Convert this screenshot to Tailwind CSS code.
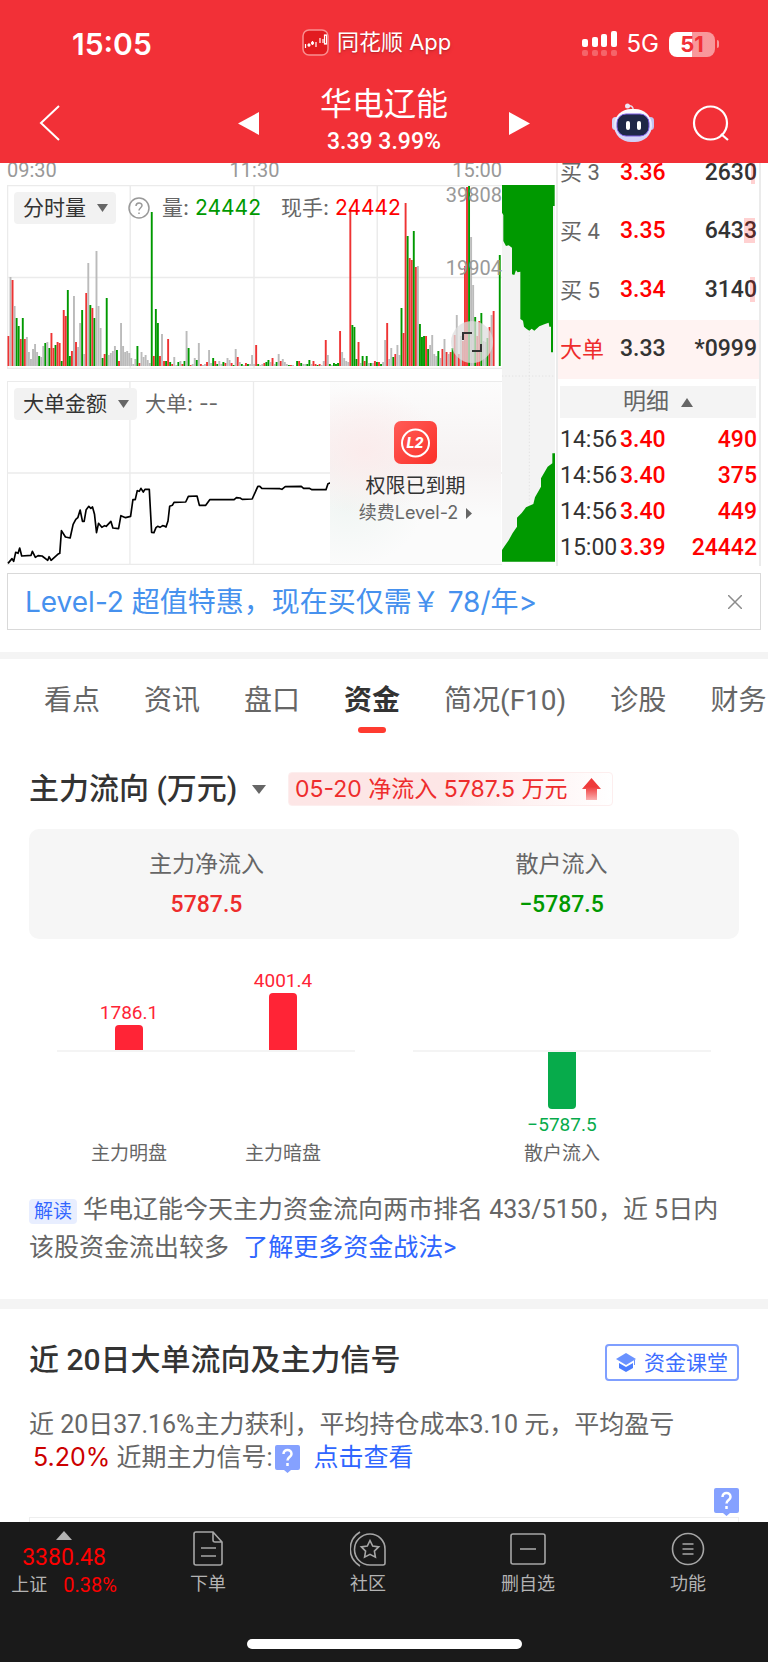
<!DOCTYPE html>
<html lang="zh-CN">
<head>
    <meta charset="UTF-8">
    <meta name="viewport" content="width=device-width, initial-scale=1.0">
    <title>华电辽能</title>
    <script src="https://cdn.jsdelivr.net/npm/@tailwindcss/browser@4"></script>
</head>
<body class="bg-white text-[#666] font-[Roboto,'Noto_Sans_CJK_SC',sans-serif] overflow-x-hidden">

    <!-- header -->
    <header class="bg-[#f23037] text-white h-[163px] pt-6">
        <div class="flex items-center h-10 pl-[72px] pr-[49px]">
            <span class="w-[230px] font-[Inter] font-semibold text-[30px] leading-10">15:05</span>
            <div class="flex items-center gap-2 pb-1">
                <svg class="w-[27px] h-[27px] shrink-0" viewBox="0 0 27 27">
                    <rect x="1" y="1" width="25" height="25" rx="6" fill="#e21c20" stroke="#f98f90" stroke-width="1.5"/>
                    <g fill="none" stroke="#fff" stroke-width="1.2">
                        <path d="M3.5 15v4M7 14.5v3M10.5 12v4M14 13v5M18 9v5M21 10v4"/>
                        <rect x="22.5" y="6" width="2" height="9"/>
                        <circle cx="7" cy="16" r="1"/>
                        <circle cx="10.500" cy="14" r="1"/>
                    </g>
                </svg>
                <span class="font-[Inter,'Noto_Sans_CJK_SC'] text-[22px] leading-8 whitespace-nowrap text-shadow-md">同花顺 App</span>
            </div>
            <div class="flex items-center ml-auto gap-[10px]">
                <svg class="w-[35px] h-[26px]" viewBox="0 0 35 26" fill="#fff">
                    <rect x="0" y="8" width="6" height="8" rx="2"/>
                    <rect x="10" y="6" width="6" height="10" rx="2"/>
                    <rect x="19" y="3" width="6" height="13" rx="2"/>
                    <rect x="29" y="0" width="6" height="16" rx="2"/>
                    <g opacity=".25">
                        <rect x="0" y="19" width="6" height="6" rx="2"/>
                        <rect x="10" y="19" width="6" height="6" rx="2"/>
                        <rect x="19" y="19" width="6" height="6" rx="2"/>
                        <rect x="29" y="19" width="6" height="6" rx="2"/>
                    </g>
                </svg>
                <span class="font-[Inter] text-[24px] leading-8">5G</span>
                <div class="flex items-center gap-[2px]">
                    <span class="w-[46px] h-[25px] rounded-lg bg-linear-to-r from-white from-50% to-white/50 to-50% text-[#f23037] font-[Inter] font-bold text-[22px] leading-[25px] text-center">51</span>
                    <span class="w-[2px] h-2 rounded-r bg-white/50"></span>
                </div>
            </div>
        </div>
        <div class="grid grid-cols-3 items-center h-[76px] mt-[21px] px-[38px]">
            <button class="w-6 h-10" aria-label="返回">
                <svg class="w-6 h-10" viewBox="0 0 24 40" fill="none" stroke="#fff" stroke-width="2"><path d="M21 3 3 20l18 17"/></svg>
            </button>
            <div class="flex items-center justify-between w-[292px] justify-self-center">
                <button aria-label="上一只"><svg class="w-[21px] h-[23px]" viewBox="0 0 21 23" fill="#fff"><path d="M0 11.500 21 0v23z"/></svg></button>
                <div class="text-center">
                    <h1 class="text-[32px] leading-[38px]">华电辽能</h1>
                    <p class="text-[23px] leading-[38px] font-medium">3.39 3.99%</p>
                </div>
                <button aria-label="下一只"><svg class="w-[21px] h-[23px]" viewBox="0 0 21 23" fill="#fff"><path d="M21 11.500 0 0v23z"/></svg></button>
            </div>
            <div class="flex items-center justify-end gap-[37px]">
                <button aria-label="智能助手">
                    <svg class="w-11 h-10" viewBox="0 0 44 40">
                        <defs>
                            <linearGradient id="rb" x1="0" y1="0" x2="0" y2="1"><stop offset="0" stop-color="#fff"/><stop offset="1" stop-color="#cfcdf6"/></linearGradient>
                        </defs>
                        <path d="M22 8c1-4-2-6-5-5" fill="none" stroke="#e6d9e8" stroke-width="1.500"/>
                        <circle cx="16.500" cy="3" r="2.500" fill="#eee6f6"/>
                        <rect x="1" y="14" width="7" height="13" rx="3.500" fill="#d4d5f5"/>
                        <rect x="36" y="14" width="7" height="13" rx="3.500" fill="#c1c3ef"/>
                        <rect x="3" y="6" width="38" height="33" rx="17" fill="url(#rb)"/>
                        <rect x="6" y="11" width="32" height="22" rx="9" fill="#1f2747" stroke="#7a5be0"/>
                        <rect x="15" y="18" width="4" height="9" rx="2" fill="#fff"/>
                        <rect x="26" y="18" width="4" height="9" rx="2" fill="#fff"/>
                    </svg>
                </button>
                <button aria-label="搜索">
                    <svg class="w-[38px] h-[38px]" viewBox="0 0 38 38" fill="none" stroke="#fff" stroke-width="2.200"><circle cx="18.500" cy="19" r="16.500"/><path d="m29 30 7 6"/></svg>
                </button>
            </div>
        </div>
    </header>

    <main>
        <!-- charts and order book -->
        <section class="flex px-[7px]">
            <div class="flex-1 min-w-0">
                <div class="flex justify-between h-[22px] text-[20px] leading-[14px] text-[#999] overflow-hidden">
                    <span>09:30</span><span>11:30</span><span>15:00</span>
                </div>
                <div class="relative h-[184px]">
                    <svg id="volume" class="block w-full h-full" viewBox="0 0 494 184" preserveAspectRatio="none">
                        <path d="M0 .5h494M0 92.500h494M0 183.500h494M.5 0v184M123 0v184M246.500 0v184M369.500 0v184" fill="none" stroke="#ebebeb" stroke-width="1.500"/>
                    </svg>
                    <div class="absolute top-[7px] left-[7px] flex items-center h-8 text-[21px] font-[Inter,'Noto_Sans_CJK_SC'] whitespace-nowrap">
                        <div class="relative bg-[#f2f2f2] rounded">
                            <select class="appearance-none block h-8 pl-[9px] pr-[30px] text-[#333]" aria-label="副图指标"><option>分时量</option></select>
                            <svg class="absolute right-2 top-3 w-[11px] h-2 pointer-events-none" viewBox="0 0 11 8"><path d="M0 0h11L5.500 8z" fill="#666"/></svg>
                        </div>
                        <svg class="w-[22px] h-[22px] mx-3" viewBox="0 0 22 22" fill="none" stroke="#999" stroke-width="1.500">
                            <circle cx="11" cy="11" r="10"/>
                            <path d="M8 9c0-4 6-4 6-.5 0 2-3 2.500-3 5M11 15.500v1.500"/>
                        </svg>
                        <span>量:&nbsp;</span><span class="text-[#009900]">24442</span>
                        <span class="ml-5">现手:&nbsp;</span><span class="text-[#ff0000]">24442</span>
                    </div>
                    <span class="absolute right-0 top-0 text-[20px] leading-5 text-[#999]">39808</span>
                    <span class="absolute right-0 top-[73px] text-[20px] leading-5 text-[#999]">19904</span>
                    <button class="absolute right-[9px] bottom-[6px] size-[42px] rounded-full bg-[#dedede]/75 flex items-center justify-center" aria-label="全屏">
                        <svg class="w-5 h-[22px]" viewBox="0 0 20 22" fill="none" stroke="#333" stroke-width="2"><path d="M1 9V2h9M19 13v7h-9"/></svg>
                    </button>
                </div>
                <div class="relative h-[184px] mt-3">
                    <svg class="block w-full h-full" viewBox="21 33 1482 552" preserveAspectRatio="none" fill="none">
                        <path d="M21 34h1482M21 309h1482M21 583h1482M22 33v552M389 33v552M759 33v552" stroke="#ebebeb" stroke-width="4"/>
                        <path d="M24 580 36 566l5 8 6-27 7 3 5-16 6 24 28-2 4-12 9 18 8-5 12 1 17 13 4-11 6 11 20-18 6-3 5-68 12 19 14 3 9-41 8-15 6-5 7-23 7 34h5l6-35 8-10 6 6 5-4 6 22 6 55 6-28 10 12 8-5 5 2 14-15 6 20 17 2 7-39 14 6 15-4 7-50h7l6-27 6 2 5-9 7 11 5-8h13l7 129 7 1 6-15 5-4 7 3 8-5 5 1 5 3 6-18 5-44 8-3 5-9 35-1 8-17 26-1 7 28h19l12-17h73l7-6 11 1 6 4 30-1 17-38h6l6 6 54 1 6 2 10-8 48-1 7 6h17l8 4h42l6-18 8-3h7" stroke="#000" stroke-width="5" stroke-linejoin="round"/>
                    </svg>
                    <div class="absolute top-[7px] left-[7px] flex items-center h-8 gap-2 text-[21px] font-[Inter,'Noto_Sans_CJK_SC'] whitespace-nowrap">
                        <div class="relative bg-[#f2f2f2] rounded">
                            <select class="appearance-none block h-8 pl-[9px] pr-[30px] text-[#333]" aria-label="第二副图指标"><option>大单金额</option></select>
                            <svg class="absolute right-2 top-3 w-[11px] h-2 pointer-events-none" viewBox="0 0 11 8"><path d="M0 0h11L5.500 8z" fill="#666"/></svg>
                        </div>
                        <span>大单: --</span>
                    </div>
                    <a href="#" class="absolute right-px top-px bottom-px w-[171px] flex flex-col items-center pt-[39px] bg-[#fafafa] bg-[radial-gradient(ellipse_at_20%_38%,#fbecec_0%,transparent_40%),radial-gradient(ellipse_at_10%_68%,#f1f6f4_0%,transparent_35%),linear-gradient(#fcfcfc,#f6f2f2_45%,#fbfbfb_75%)]">
                        <svg class="size-[43px]" viewBox="0 0 43 43">
                            <defs><linearGradient id="l2" x1="0" y1="0" x2="1" y2="1"><stop offset="0" stop-color="#ff5b56"/><stop offset="1" stop-color="#fb3029"/></linearGradient></defs>
                            <rect width="43" height="43" rx="7" fill="url(#l2)"/>
                            <circle cx="21.500" cy="22" r="13.500" fill="none" stroke="#fff" stroke-width="2"/>
                            <text x="21" y="27" text-anchor="middle" fill="#fff" font-family="Inter" font-size="14" font-style="italic" font-weight="800">L2</text>
                        </svg>
                        <span class="mt-2 text-[20px] leading-7 text-[#333]">权限已到期</span>
                        <span class="flex items-center gap-2 text-[18px] leading-[26px] font-[Inter,'Noto_Sans_CJK_SC']">续费Level-2
                            <svg class="w-[6px] h-[11px]" viewBox="0 0 6 11"><path d="M0 0l6 5.500L0 11z" fill="#666"/></svg>
                        </span>
                    </a>
                </div>
            </div>

            <!-- price depth -->
            <div class="w-[53px] mt-[22px] h-[377px] bg-[#f3f3f3]">
                <svg class="block w-full h-full" viewBox="0 0 159 1131" preserveAspectRatio="none">
                    <path d="M0 573h159M82 430v560" stroke="#e2e2e2" stroke-width="3" stroke-dasharray="4 6"/>
                    <path transform="translate(-753 -90)" fill="#009900" d="M753 90h158v63h-5v439h-6v-77h-5l-2-12-13 5-15 6-15 13-8-6-7 6-8-5-8-7-3-18-8-5V350l-8 2-5-6-5 14-7-2v-80l-10-7-8 2-8-15v-78l-6-10-2 30h-5z"/>
                    <path transform="translate(-543 555)" fill="#009900" d="M543 575v-35l8-12 12-17 12-22 13-19v-27l14-14 13-17 22-10 5-20 18-32v-25l20-35 14-10v-30h8v325z"/>
                </svg>
            </div>

            <!-- order book -->
            <div class="w-[205px] ml-px border-x-2 border-[#ebebeb] overflow-hidden">
                <table class="w-full table-fixed text-[23px] font-medium">
                    <tbody>
                        <tr class="h-[39px] align-top leading-5">
                            <td class="pl-[2px] w-[62px] font-normal text-[22px]">买 3</td>
                            <td class="w-[56px] text-[#ff0000]">3.36</td>
                            <td class="relative pr-[2px] text-right text-[#333]"><i class="absolute top-0 right-1 w-1 h-[21px] bg-[#ff0000]/18"></i>2630</td>
                        </tr>
                        <tr class="h-[59px]">
                            <td class="pl-[2px] font-normal text-[22px]">买 4</td>
                            <td class="text-[#ff0000]">3.35</td>
                            <td class="relative pr-[2px] text-right text-[#333]"><i class="absolute top-4 right-1 w-[11px] h-[25px] bg-[#ff0000]/18"></i>6433</td>
                        </tr>
                        <tr class="h-[59px]">
                            <td class="pl-[2px] font-normal text-[22px]">买 5</td>
                            <td class="text-[#ff0000]">3.34</td>
                            <td class="relative pr-[2px] text-right text-[#333]"><i class="absolute top-4 right-1 w-[5px] h-[25px] bg-[#ff0000]/18"></i>3140</td>
                        </tr>
                        <tr class="h-[59px] bg-[#fff3f2] text-[#333]">
                            <td class="pl-[2px] font-normal text-[22px] text-[#ee2c2c]">大单</td>
                            <td>3.33</td>
                            <td class="pr-[2px] text-right">*0999</td>
                        </tr>
                    </tbody>
                </table>
                <button class="flex items-center justify-center gap-3 w-[196px] h-8 mt-[7px] ml-[2px] mb-1 bg-[#f4f4f4] text-[23px] leading-8">明细
                    <svg class="w-3 h-[9px]" viewBox="0 0 12 9"><path d="M0 9h12L6 0z" fill="#666"/></svg>
                </button>
                <table class="w-full table-fixed text-[23px] leading-9 font-medium text-[#ff0000]">
                    <tbody>
                        <tr><td class="pl-[2px] w-[62px] font-normal text-[#333]">14:56</td><td class="w-[56px]">3.40</td><td class="pr-[2px] text-right">490</td></tr>
                        <tr><td class="pl-[2px] font-normal text-[#333]">14:56</td><td>3.40</td><td class="pr-[2px] text-right">375</td></tr>
                        <tr><td class="pl-[2px] font-normal text-[#333]">14:56</td><td>3.40</td><td class="pr-[2px] text-right">449</td></tr>
                        <tr><td class="pl-[2px] font-normal text-[#333]">15:00</td><td>3.39</td><td class="pr-[2px] text-right">24442</td></tr>
                    </tbody>
                </table>
            </div>
        </section>

        <!-- promo -->
        <div class="flex items-center justify-between mx-[7px] mt-[7px] h-[57px] pl-[17px] pr-[18px] border border-[#d9d9d9]">
            <a href="#" class="font-[Inter,'Noto_Sans_CJK_SC'] text-[28px] leading-10 text-[#4691ee]">Level-2 超值特惠，现在买仅需￥ 78/年&gt;</a>
            <button aria-label="关闭"><svg class="size-[14px]" viewBox="0 0 14 14" stroke="#8c8c8c" stroke-width="1.500"><path d="m0 0 14 14M14 0 0 14"/></svg></button>
        </div>

        <nav class="mt-[22px] border-t-7 border-[#f4f4f4] flex gap-11 pl-11 pt-[22px] h-[100px] text-[28px] leading-10 whitespace-nowrap overflow-hidden">
            <a href="#">看点</a>
            <a href="#">资讯</a>
            <a href="#">盘口</a>
            <a href="#" class="flex flex-col items-center gap-[6px] font-bold text-[#333]">资金<i class="w-7 h-[6px] rounded-sm bg-[#ff3b30]"></i></a>
            <a href="#">简况(F10)</a>
            <a href="#">诊股</a>
            <a href="#">财务</a>
        </nav>

        <!-- main fund flow -->
        <section class="px-[29px]">
            <div class="flex items-center gap-[22px] h-[34px] mt-5">
                <div class="relative">
                    <select class="appearance-none block h-10 pr-7 text-[30px] leading-10 font-medium text-[#333]" aria-label="资金流向单位"><option>主力流向 (万元)</option></select>
                    <svg class="absolute right-0 top-4 w-[14px] h-[9px] pointer-events-none" viewBox="0 0 14 9"><path d="M0 0h14L7 9z" fill="#666"/></svg>
                </div>
                <div class="flex items-center gap-[14px] h-[34px] pl-[6px] pr-[11px] rounded border border-[#fdeeee] bg-linear-to-r from-[#fde6e6] from-50% to-white font-[Inter,'Noto_Sans_CJK_SC'] text-[23px] leading-8 text-[#ee2c2c] whitespace-nowrap">05-20 净流入 5787.5 万元
                    <svg class="w-[19px] h-[22px]" viewBox="0 0 19 22">
                        <defs><linearGradient id="up" x1="0" y1="0" x2="0" y2="1"><stop offset=".4" stop-color="#ee3a3a"/><stop offset="1" stop-color="#fbb0b0"/></linearGradient></defs>
                        <path d="M9.500 0 19 11h-4v11H4V11H0z" fill="url(#up)"/>
                    </svg>
                </div>
            </div>

            <dl class="grid grid-cols-2 mt-[23px] h-[110px] pt-4 rounded-[10px] bg-[#f6f6f6] text-center">
                <div>
                    <dt class="text-[23px] leading-10">主力净流入</dt>
                    <dd class="text-[23px] leading-10 font-medium text-[#ee2c2c]">5787.5</dd>
                </div>
                <div>
                    <dt class="text-[23px] leading-10">散户流入</dt>
                    <dd class="text-[23px] leading-10 font-medium text-[#009900]">−5787.5</dd>
                </div>
            </dl>

            <div class="flex justify-between px-7 mt-[29px] text-[19px] leading-6 text-center">
                <div class="w-[298px]">
                    <div class="flex items-end justify-between h-[84px] px-8 border-b-2 border-[#f4f4f4] text-[#ff2436]">
                        <div class="w-20 flex flex-col items-center"><span>1786.1</span><i class="w-7 h-[25px] rounded-t bg-[#ff2436]"></i></div>
                        <div class="w-20 flex flex-col items-center"><span>4001.4</span><i class="w-7 h-[57px] rounded-t bg-[#ff2436]"></i></div>
                    </div>
                    <div class="flex justify-between px-8 mt-[90px]">
                        <span class="w-20">主力明盘</span>
                        <span class="w-20">主力暗盘</span>
                    </div>
                </div>
                <div class="w-[298px]">
                    <div class="h-[84px] border-b-2 border-[#f4f4f4]"></div>
                    <div class="flex flex-col items-center h-[90px] text-[#07ab4b]"><i class="w-7 h-[57px] mb-1 rounded-b bg-[#07ab4b]"></i><span>−5787.5</span></div>
                    <span>散户流入</span>
                </div>
            </div>

            <p class="mt-[25px] text-[25px] leading-[38px]">
                <span class="inline-block align-middle px-[5px] mr-[6px] rounded bg-[#e8eeff] text-[19px] leading-[25px] text-[#3366ff]">解读</span>华电辽能今天主力资金流向两市排名 433/5150，近 5日内<br>该股资金流出较多 <a href="#" class="ml-2 text-[#2f66ff] whitespace-nowrap">了解更多资金战法&gt;</a>
            </p>
        </section>

        <!-- 20 day signals -->
        <section class="mt-8 border-t-10 border-[#f4f4f4] px-[29px]">
            <div class="flex items-start justify-between mt-[35px]">
                <h2 class="text-[30px] leading-8 font-medium text-[#333]">近 20日大单流向及主力信号</h2>
                <button class="flex items-center gap-2 h-[37px] px-[9px] rounded border-2 border-[#7f9fff] text-[21px] leading-8 text-[#3d6dff]">
                    <svg class="w-5 h-[19px]" viewBox="0 0 20 19" fill="#6a92ff"><path d="M10 0 20 6 10 12 0 6z"/><path d="M3 10v5l7 4 7-4v-5l-7 4z" fill="#4b7dff"/><path d="M18.500 7v5" stroke="#6a92ff"/></svg>资金课堂
                </button>
            </div>
            <p class="mt-[27px] text-[25px] leading-[33px]">近 20日37.16%主力获利，平均持仓成本3.10 元，平均盈亏<br>
                <span class="ml-1 font-[Inter] text-[#cc0000]">5.20%</span> 近期主力信号:<svg class="inline-block align-middle w-[25px] h-[28px] ml-[2px] mr-[14px]" viewBox="0 0 25 28"><path d="M2 0h21q2 0 2 2v21q0 2-2 2h-7l-3.500 3L9 25H2q-2 0-2-2V2q0-2 2-2z" fill="#85a1ff"/><path d="M8.500 9c0-5.500 8-5.500 8 0 0 3-4 3-4 6.500M12.500 18v3" fill="none" stroke="#fff" stroke-width="2.500"/></svg><a href="#" class="text-[#2f66ff]">点击查看</a>
            </p>
            <div class="flex justify-end mt-[14px]">
                <svg class="w-[25px] h-[28px]" viewBox="0 0 25 28"><path d="M2 0h21q2 0 2 2v21q0 2-2 2h-7l-3.500 3L9 25H2q-2 0-2-2V2q0-2 2-2z" fill="#85a1ff"/><path d="M8.500 9c0-5.500 8-5.500 8 0 0 3-4 3-4 6.500M12.500 18v3" fill="none" stroke="#fff" stroke-width="2.500"/></svg>
            </div>
            <div class="h-[5px] mt-px border border-b-0 border-[#eee]"></div>
        </section>
    </main>

    <!-- bottom bar -->
    <footer class="bg-[#1a1a1a] h-[141px] text-[#b3b3b3]">
        <div class="grid grid-cols-[128px_1fr_1fr_1fr_1fr] h-[117px] text-[18px] leading-[26px] text-center">
            <a href="#" class="flex flex-col items-center pt-[9px]">
                <svg class="w-4 h-[9px]" viewBox="0 0 16 9"><path d="M0 9h16L8 0z" fill="#b3b3b3"/></svg>
                <span class="mt-1 text-[23px] leading-7 text-[#ff0000]">3380.48</span>
                <span class="flex gap-4"><span>上证</span><span class="text-[20px] text-[#ff0000]">0.38%</span></span>
            </a>
            <a href="#" class="flex flex-col items-center gap-1 pt-[9px]">
                <svg class="size-9" viewBox="0 0 36 36" fill="none" stroke="#a6a6a6" stroke-width="1.600"><path d="M4 3q0-2 2-2h17l9 10v21q0 2-2 2H6q-2 0-2-2zM23 1v8q0 2 2 2h7M11 17h15M11 25h15"/></svg>
                下单
            </a>
            <a href="#" class="flex flex-col items-center gap-1 pt-[9px]">
                <svg class="size-9" viewBox="0 0 36 36" fill="none" stroke="#a6a6a6" stroke-width="1.600"><path d="M20 3a15 15 0 1 0 0 31h13q2 0 2-2V18A15 15 0 0 0 20 3zM10 1C-3 9-3 27 10 35"/><path d="m20 9.500 2.700 5.500 6 .9-4.300 4.200 1 6-5.400-2.800-5.400 2.800 1-6-4.300-4.200 6-.9z"/></svg>
                社区
            </a>
            <a href="#" class="flex flex-col items-center gap-1 pt-[9px]">
                <svg class="size-9" viewBox="0 0 36 36" fill="none" stroke="#a6a6a6" stroke-width="1.600"><rect x="1" y="3" width="34" height="30" rx="2"/><path d="M10 18h16"/></svg>
                删自选
            </a>
            <a href="#" class="flex flex-col items-center gap-1 pt-[9px]">
                <svg class="size-9" viewBox="0 0 36 36" fill="none" stroke="#a6a6a6" stroke-width="1.600"><circle cx="18" cy="18" r="15.500"/><path d="M12.500 13h11M12.500 18h11M12.500 23h11"/></svg>
                功能
            </a>
        </div>
        <div class="w-[275px] h-[10px] mx-auto rounded-full bg-white"></div>
    </footer>

<script>
    // one entry per minute: r = up, g = down, y = flat, followed by the bar height
    const bars = ("r30 y89 r86 y60 g48 g40 r27 g48 r27 y29 y14 y7 y17 y22 y14 g10 y9 y20 g23 y24 g18 r33 r18 g21 r24 r23 g5 r56 r50 g76 " +
        "g10 r15 y70 r24 y19 y43 g56 y12 r73 y103 g61 r58 g48 y115 y60 y38 g8 r12 g68 y11 y13 y15 y20 g16 r5 y43 y20 y14 y15 y13 " +
        "y8 y2 y7 g20 r3 y14 y9 y11 y6 y3 g154 r10 g57 g43 r10 y32 r5 g5 r27 g4 r2 y9 y1 g4 y5 r2 g5 y35 g18 r1 " +
        "y2 y8 g6 y23 r2 y1 y2 r4 y16 y3 g8 r5 g2 y5 y2 g4 r3 y8 y6 r3 g1 y17 r9 y4 g2 y1 r3 g2 y2 y11 " +
        "y2 r21 g2 y1 y2 r3 g4 g6 y4 r8 y2 g4 y12 r5 y7 y4 y2 g1 r1 y1 y0 g5 r5 g3 y2 y2 g2 g6 y2 r5 " +
        "r2 g1 r2 y1 y5 r26 y11 g2 y1 g3 g2 g3 r35 y14 y8 y5 y4 r157 g41 g39 g7 r24 y3 g10 r5 g10 y3 g3 y3 r5 " +
        "g4 r4 g2 y4 y26 r43 y7 y18 g9 r12 y21 y11 g58 r33 r163 g130 r108 r106 g135 r99 y100 g42 g29 g30 r30 g17 y21 y31 y12 y10 " +
        "g15 y8 r17 y27 r14 y12 r14 g18 r31 y51 r12 y30 r25 r100 r179 g180 y129 y81 g49 r30 r45 g53 y25 y24 g28 r39 y51 r55 y0 y0 g111").split(" ");
    const colors = { r: "#ee3333", g: "#009900", y: "#bbbbbb" };
    const volume = document.getElementById("volume");
    bars.forEach((bar, i) => {
        const h = Number(bar.slice(1));
        const rect = document.createElementNS("http://www.w3.org/2000/svg", "rect");
        rect.setAttribute("x", 0.5 + i * 2.043);
        rect.setAttribute("y", 181 - h);
        rect.setAttribute("width", 1.9);
        rect.setAttribute("height", h);
        rect.setAttribute("fill", colors[bar[0]]);
        volume.appendChild(rect);
    });
</script>
</body>
</html>
